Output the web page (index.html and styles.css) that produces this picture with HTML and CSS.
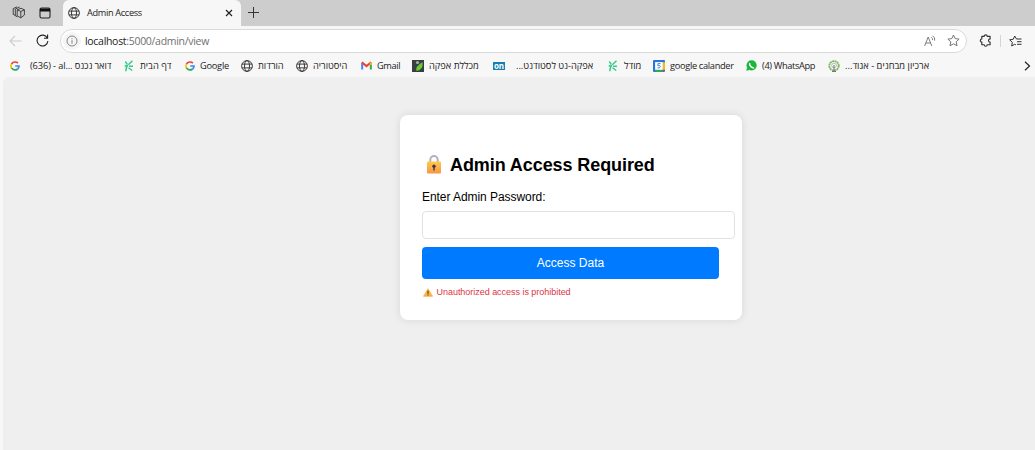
FILE: index.html
```html
<!DOCTYPE html>
<html lang="en">
<head>
<meta charset="utf-8">
<title>Admin Access</title>
<link rel="stylesheet" href="styles.css">
</head>
<body>
<svg class="defs" width="0" height="0">
  <symbol id="globe" viewBox="0 0 12 12"><g fill="none" stroke="#333" stroke-width=".95"><circle cx="6" cy="6" r="5.4"/><ellipse cx="6" cy="6" rx="2.5" ry="5.4"/><path d="M1 4.1h10M1 7.9h10"/></g></symbol>
  <symbol id="google" viewBox="0 0 10 10"><g fill="none" stroke-width="1.7"><path d="M1.500 3.100A4 4 0 0 1 7.900 2.200" stroke="#ea4335"/><path d="M1.500 3.100a4 4 0 0 0 0 3.800" stroke="#fbbc05"/><path d="M1.500 6.900A4 4 0 0 0 7.600 8" stroke="#34a853"/><path d="M7.600 8A4 4 0 0 0 9 5H5.200" stroke="#4285f4"/></g></symbol>
  <symbol id="sprig" viewBox="0 0 10 12"><g fill="none" stroke="#35cb86" stroke-width="1.400"><path d="M8.500.8 4.300 4.800M1.300 1.500 3.300 4.500M.7 5.500l2.300 1M9 6.300H5M4.500 7.700l3.700 2.800M3.800 5Q2 7.500 1.800 11.300"/></g></symbol>
</svg>

<header class="tabs">
  <svg class="workspaces" width="13" height="13" viewBox="0 0 13 13" fill="none" stroke="#333" stroke-width=".9"><path d="m5.200 3.800 3.900-1.500 3.300 1.500v5.200l-3.600 2.800-3.600-1.800zM5.200 3.800l3.600 1.700 3.600-1.700M8.800 5.500v6.200"/><path d="M3.300 9.800V3L7.700 1M1.200 8.400V2.600L5.200.8M3.300 9.800l2 .9M1.200 8.400l2 1"/></svg>
  <svg class="tab-menu" width="12" height="12" viewBox="0 0 12 12"><rect x="1" y="1" width="10" height="10" rx="1.500" fill="none" stroke="#222" stroke-width="1.100"/><path d="M1 1.500h10v3H1z" fill="#111"/></svg>
  <div class="tab">
    <svg width="12" height="12"><use href="#globe"/></svg>
    <span class="tab-title">Admin Access</span>
    <svg class="close" width="8" height="8" viewBox="0 0 8 8" stroke="#222" stroke-width="1.200"><path d="m1 1 6 6M7 1 1 7"/></svg>
  </div>
  <svg class="plus" width="11" height="11" viewBox="0 0 11 11" stroke="#333"><path d="M5.500 0v11M0 5.500h11"/></svg>
</header>

<nav class="toolbar">
  <svg class="back" width="13" height="12" viewBox="0 0 13 12" fill="none" stroke="#ccc" stroke-width="1.100"><path d="M12.500 6H1M6 1 1 6l5 5"/></svg>
  <svg class="reload" width="13" height="13" viewBox="0 0 13 13" fill="none" stroke="#222" stroke-width="1.100"><path d="M11.300 4A5.400 5.400 0 1 0 11.900 7M11.600.6v3.700H8"/></svg>
  <div class="address">
    <span class="info"><svg width="12" height="12" viewBox="0 0 12 12" fill="none" stroke="#777" stroke-width=".9"><circle cx="6" cy="6" r="5"/><path d="M6 5.200v3.500M6 3.200v1"/></svg></span>
    <span class="url"><b>localhost</b>:5000/admin/view</span>
    <svg class="read" width="13" height="12" viewBox="0 0 13 12" fill="none" stroke="#777" stroke-width=".95"><path d="m.6 11 3.600-9 3.600 9M1.900 8h4.600M7.300 2.300q1.500 1 1.200 2.800M8.600.8q2.600 1.500 2.100 4.800"/></svg>
    <svg class="star" width="13" height="13" viewBox="0 0 13 13" fill="none" stroke="#777" stroke-linejoin="round"><path d="m6.500 1 1.700 3.600 3.900.5-2.900 2.700.8 4-3.500-2-3.500 2 .8-4L.9 5.100l3.900-.5z"/></svg>
  </div>
  <svg class="puzzle" width="13" height="13" viewBox="0 0 13 13" fill="none" stroke="#333" stroke-width="1.150" stroke-linejoin="round"><path d="M2.800 2.300h2.400a1.500 1.500 0 0 1 3 0h2.900v2.600a1.600 1.600 0 1 0 0 3.200v2.600H8.200a1.500 1.500 0 0 1-3 0H2.800V8a1.500 1.500 0 0 1 0-3z"/></svg>
  <i class="divider"></i>
  <svg class="favorites" width="13" height="12" viewBox="0 0 13 12" fill="none" stroke="#333" stroke-linejoin="round"><path d="M7.500 4 5.700 1 4.200 4.300.7 4.800l2.600 2.500-.6 3.700 3-1.700 1.200.6M7.500 4H12.500M8 6.700h4.500M8 9.300h4.500"/></svg>
</nav>

<nav class="bookmarks">
  <a class="bm b1"><svg width="10" height="10"><use href="#google"/></svg><span>(636) - al... דואר נכנס</span></a>
  <a class="bm b2"><svg width="10" height="12"><use href="#sprig"/></svg><span>דף הבית</span></a>
  <a class="bm b3"><svg width="10" height="10"><use href="#google"/></svg><span>Google</span></a>
  <a class="bm b4"><svg width="12" height="12"><use href="#globe"/></svg><span>הורדות</span></a>
  <a class="bm b5"><svg width="12" height="12"><use href="#globe"/></svg><span>היסטוריה</span></a>
  <a class="bm b6"><svg width="11" height="9" viewBox="0 0 11 9" fill="none" stroke-width="2"><path d="M1.200 8.500V2" stroke="#4285f4"/><path d="M9.800 8.500V2" stroke="#34a853"/><path d="m.8 1.300 4.700 3.800 4.700-3.800" stroke="#ea4335"/><path d="M9.800 4V1.500" stroke="#fbbc05"/></svg><span>Gmail</span></a>
  <a class="bm b7"><svg width="12" height="12" viewBox="0 0 12 12"><path fill="#3b3e40" d="M0 0h12v12H0z"/><path d="M4.500 11Q3 6.500 10.500 2q1.200 8-6 9z" fill="#6cc93a"/><circle cx="5.500" cy="2.500" r="1.600" fill="#aaa"/></svg><span>מכללת אפקה</span></a>
  <a class="bm b8"><em class="on">on</em><span dir="rtl">אפקה-נט לסטודנט...</span></a>
  <a class="bm b9"><svg width="10" height="12"><use href="#sprig"/></svg><span>מודל</span></a>
  <a class="bm b10"><svg width="12" height="12" viewBox="0 0 12 12"><rect width="12" height="12" rx="1" fill="#2874df"/><path fill="#fbbc05" d="M9.800 2.200H12v7.600H9.800z"/><path fill="#34a853" d="M2.200 9.800h7.600V12H2.200z"/><path fill="#ea4335" d="M9.800 9.800H12L9.800 12z"/><path fill="#fff" d="M2.100 2.100h7.700v7.700H2.100z"/><path d="M7.500 3.600H5L4.800 5.600Q7.400 5 7.300 6.800 6.900 8.500 4.500 7.900" fill="none" stroke="#2874df" stroke-width=".9"/></svg><span>google calander</span></a>
  <a class="bm b11"><svg width="11" height="11" viewBox="0 0 11 11"><circle cx="5.600" cy="5.300" r="5.100" fill="#19b63c"/><path d="M.3 10.800 1 7.500l2.500 2.400z" fill="#19b63c"/><path d="M3.700 3q-.7 1.800 1.200 3.600T8 7.600" stroke="#fff" stroke-width="1.500" fill="none"/></svg><span>(4) WhatsApp</span></a>
  <a class="bm b12"><svg width="12" height="12" viewBox="0 0 12 12" fill="none"><circle cx="6" cy="5.800" r="4.700" stroke="#7fb661" stroke-width="1.900" stroke-dasharray="2 .45"/><circle cx="6" cy="5.500" r="2.300" stroke="#91a78a" stroke-width=".7"/><path d="M6 5v6M4 11.500h4" stroke="#777" stroke-width="1.100"/></svg><span dir="rtl">ארכיון מבחנים - אגוד...</span></a>
  <svg class="more" width="7" height="10" viewBox="0 0 7 10" fill="none" stroke="#222" stroke-width="1.200"><path d="m1 .8 4.500 4.200L1 9.200"/></svg>
</nav>

<main class="page">
  <form class="card">
    <h1><svg width="16" height="19" viewBox="0 0 16 19"><defs><linearGradient id="gold" x2="0" y2="1"><stop stop-color="#ffcb45"/><stop offset="1" stop-color="#f79448"/></linearGradient></defs><path d="M4.300 8V4.800a3.700 3.700 0 0 1 7.400 0V8" fill="none" stroke="#b5adc1" stroke-width="2"/><rect x="1" y="6.600" width="14" height="11.800" rx="1" fill="url(#gold)"/><circle cx="8" cy="11.300" r="1.700" fill="#443452"/><path d="M7.300 11h1.400v4.500H7.300z" fill="#443452"/></svg><span>Admin Access Required</span></h1>
    <label for="password">Enter Admin Password:</label>
    <input id="password" type="password">
    <button type="button">Access Data</button>
    <p class="warning"><svg width="10" height="9" viewBox="0 0 10 9"><path d="M5 .7 9.500 8.300H.5z" fill="#fcb344" stroke="#fcb344" stroke-width=".8" stroke-linejoin="round"/><path d="M5 2.700v3M5 6.400v1.200" stroke="#54452f" stroke-width="1.200"/></svg><span>Unauthorized access is prohibited</span></p>
  </form>
</main>
</body>
</html>
```
FILE: styles.css
```css
* { box-sizing: border-box; }
body {
  margin: 0;
  width: 1035px;
  height: 450px;
  overflow: hidden;
  background: #f7f7f7;
  font-family: "Open Sans", "Noto Sans", "DejaVu Sans", sans-serif;
  color: #222;
}
svg { display: block; flex: none; }
.defs { position: absolute; }
.tabs { display: flex; height: 26px; padding-bottom: 1px; background: #cdcdcd; align-items: center; }
.workspaces { margin-left: 12px; }
.tab-menu { margin-left: 14px; }
.tab {
  display: flex;
  align-items: center;
  align-self: stretch;
  width: 178px;
  margin: 0 0 -1px 12px;
  padding: 0 0 1px 5px;
  background: #f7f7f7;
  border-radius: 6px 6px 0 0;
}
.tab-title { width: 138px; margin-left: 7px; font-size: 9.2px; letter-spacing: -.33px; white-space: nowrap; }
.plus { margin-left: 7px; }
.toolbar { display: flex; align-items: center; height: 29px; }
.back { margin-left: 9px; }
.reload { margin-left: 14px; }
.address {
  display: flex;
  align-items: center;
  width: 907px;
  height: 24px;
  margin-left: 11px;
  background: #fff;
  border: 1px solid #dadada;
  border-radius: 12px;
}
.info { display: grid; place-items: center; width: 18px; height: 18px; margin-left: 2px; border-radius: 50%; background: #f5f5f5; }
.url { flex: 1; margin-left: 4px; font-size: 10.5px; letter-spacing: -.3px; color: #707070; white-space: nowrap; }
.url b { font-weight: 400; color: #222; }
.read { margin-right: 10px; }
.star { margin-right: 6px; }
.puzzle { margin-left: 12px; }
.divider { width: 1px; height: 12px; margin-left: 8px; background: #d5d5d5; }
.favorites { margin-left: 8px; }
.bookmarks { display: flex; align-items: center; height: 22px; padding: 0 0 1px 10px; }
.bm { display: flex; align-items: center; flex: none; gap: 5px; font-size: 9.25px; white-space: nowrap; }
.bm span { flex: 1; min-width: 0; }
.b1 { width: 114px; gap: 10px; letter-spacing: -.11px; }
.b2 { width: 61px; gap: 6px; }
.b3 { width: 56px; letter-spacing: -.25px; }
.b4 { width: 55px; }
.b5 { width: 65px; }
.b6 { width: 51px; letter-spacing: -.4px; }
.b7 { width: 81px; }
.b8 { width: 115px; gap: 11px; }
.b9 { width: 45px; gap: 6px; }
.b10 { width: 93px; letter-spacing: -.32px; }
.b11 { width: 82px; letter-spacing: -.35px; }
.b12 { width: 102px; letter-spacing: .03px; }
.bm span[dir] { flex: none; }
.on { width: 12px; height: 8px; background: #1680b0; color: #fff; font: bold 8px/7px "Open Sans", sans-serif; text-align: center; }
.more { margin-left: 94px; }
.page { display: flex; height: 373px; margin-left: 3px; padding: 38px 0 0 397px; align-items: flex-start; background: #efefef; border-radius: 6px 0 0 0; }
.card {
  display: flex;
  flex-direction: column;
  width: 341.5px;
  height: 205px;
  padding: 40px 22px 0;
  background: #fff;
  border-radius: 8px;
  box-shadow: 0 0 8px rgba(0, 0, 0, .1);
  font-family: "Liberation Sans", Arial, sans-serif;
  color: #000;
}
h1 { display: flex; align-items: center; gap: 8px; height: 20px; margin: 0; padding-left: 4px; font-size: 18px; letter-spacing: -.08px; white-space: nowrap; }
h1 svg { margin-top: -1px; }
label { margin-top: 15px; height: 14px; font-size: 12px; letter-spacing: -.06px; line-height: 14px; }
input { width: 313px; height: 28px; margin-top: 7px; border: 1px solid #e2e2e2; border-radius: 4px; background: #fff; }
button { width: 297px; height: 31.5px; margin-top: 8px; padding: 1px 0 0; border: 0; border-radius: 4px; background: #007bff; color: #fff; font: 12px "Liberation Sans", Arial, sans-serif; }
.warning { display: flex; align-items: center; gap: 3.5px; margin: 8.5px 0 0; padding-left: 1px; font-size: 9px; letter-spacing: -.03px; line-height: 11px; color: #dc3545; white-space: nowrap; }
```
